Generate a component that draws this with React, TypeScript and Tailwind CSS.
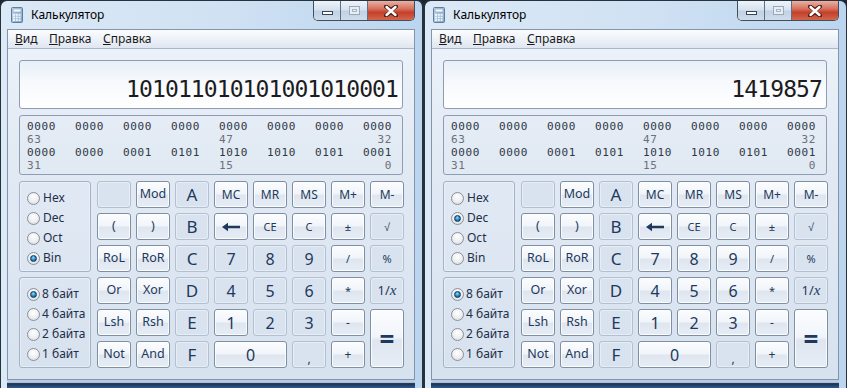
import React from "react";

type Btn = {
  l: React.ReactNode;
  on: boolean;
  sz: string;
  span?: string;
};

const SANS = "font-['Noto_Sans',sans-serif]";
const MONO = "font-['DejaVu_Sans_Mono',monospace]";

const BTN_ON =
  "border-[#7f8fa3] bg-[linear-gradient(to_bottom,#fbfcfe_0%,#f1f5fa_47%,#dfe6f0_53%,#e7edf5_100%)] shadow-[inset_0_0_0_1px_rgba(255,255,255,0.8)]";
const BTN_OFF = "border-[#b2c0d2] bg-[#d9e3f0] shadow-[inset_0_0_0_1px_rgba(255,255,255,0.35)]";

const Arrow = () => (
  <svg width="20" height="10" viewBox="0 0 20 10">
    <path d="M1 5 L7 0.8 L7 3.7 L19 3.7 L19 6.3 L7 6.3 L7 9.2 Z" fill="#1e395b" />
  </svg>
);

function makeKeys(mode: "bin" | "dec"): Btn[] {
  const d = mode === "dec";
  const W = "text-[12.5px]";
  const H = "text-[17px]";
  const D = "text-[16px]";
  const M = "text-[12px]";
  const S = "text-[11px]";
  return [
    { l: "", on: false, sz: W },
    { l: "Mod", on: true, sz: W },
    { l: "A", on: false, sz: H },
    { l: "MC", on: true, sz: M },
    { l: "MR", on: true, sz: M },
    { l: "MS", on: true, sz: M },
    { l: "M+", on: true, sz: M },
    { l: "M-", on: true, sz: M },

    { l: "(", on: true, sz: W },
    { l: ")", on: true, sz: W },
    { l: "B", on: false, sz: H },
    { l: <Arrow />, on: true, sz: M },
    { l: "CE", on: true, sz: S },
    { l: "C", on: true, sz: S },
    { l: "±", on: true, sz: S },
    { l: "√", on: false, sz: S },

    { l: "RoL", on: true, sz: W },
    { l: "RoR", on: true, sz: W },
    { l: "C", on: false, sz: H },
    { l: "7", on: d, sz: D },
    { l: "8", on: d, sz: D },
    { l: "9", on: d, sz: D },
    { l: "/", on: true, sz: S },
    { l: "%", on: false, sz: S },

    { l: "Or", on: true, sz: W },
    { l: "Xor", on: true, sz: W },
    { l: "D", on: false, sz: H },
    { l: "4", on: d, sz: D },
    { l: "5", on: d, sz: D },
    { l: "6", on: d, sz: D },
    { l: "*", on: true, sz: S },
    {
      l: (
        <span>
          1/<span className="italic font-['Liberation_Serif',serif] text-[15px]">x</span>
        </span>
      ),
      on: false,
      sz: "text-[13px]",
    },

    { l: "Lsh", on: true, sz: W },
    { l: "Rsh", on: true, sz: W },
    { l: "E", on: false, sz: H },
    { l: "1", on: true, sz: D },
    { l: "2", on: d, sz: D },
    { l: "3", on: d, sz: D },
    { l: "-", on: true, sz: M },
    { l: "=", on: true, sz: "text-[26px] font-bold", span: "row-span-2" },

    { l: "Not", on: true, sz: W },
    { l: "And", on: true, sz: W },
    { l: "F", on: false, sz: H },
    { l: "0", on: true, sz: D, span: "col-span-2" },
    { l: <span className="relative top-[4px]">,</span>, on: false, sz: M },
    { l: "+", on: true, sz: M },
  ];
}

function Radio({ checked }: { checked: boolean }) {
  return (
    <span className="flex h-[13px] w-[13px] shrink-0 items-center justify-center rounded-full border border-[#8c9096] bg-[radial-gradient(circle_at_50%_35%,#ffffff_0%,#eceef1_55%,#cfd3d8_100%)]">
      {checked && (
        <span className="h-[7px] w-[7px] rounded-full border border-[#0f3a5c] bg-[radial-gradient(circle_at_45%_35%,#9fe0ff_0%,#2d8fce_45%,#0d3e66_100%)]" />
      )}
    </span>
  );
}

function Group({ items, sel, gap }: { items: string[]; sel: number; gap: string }) {
  return (
    <div className="flex flex-1 flex-col rounded-[3px] border border-[#a3b2c5] pl-[7px] pt-[6px] shadow-[inset_0_0_0_1px_rgba(255,255,255,0.35)]">
      {items.map((t, i) => (
        <div key={i} className={`flex h-[20px] items-center ${gap}`}>
          <Radio checked={i === sel} />
          <span className="text-[12px] text-[#1e2f48]">{t}</span>
        </div>
      ))}
    </div>
  );
}

function CalcIcon() {
  return (
    <svg width="12" height="16" viewBox="0 0 12 16">
      <defs>
        <linearGradient id="cg" x1="0" y1="0" x2="1" y2="1">
          <stop offset="0" stopColor="#c9dcef" />
          <stop offset="1" stopColor="#7ea3c8" />
        </linearGradient>
      </defs>
      <rect x="0.5" y="0.5" width="11" height="15" rx="1" fill="url(#cg)" stroke="#5f7f9f" />
      <rect x="2" y="2" width="8" height="3" fill="#f4f8fc" stroke="#7b98b5" strokeWidth="0.6" />
      {[0, 1, 2].map((r) =>
        [0, 1, 2].map((c) => (
          <rect key={`${r}${c}`} x={2 + c * 2.8} y={7 + r * 2.6} width="2" height="1.8" fill="#f3f7fb" />
        ))
      )}
    </svg>
  );
}

function TitleButtons() {
  return (
    <div className="flex h-[20px] self-start overflow-hidden rounded-b-[5px] border border-t-0 border-[#3f4f63]">
      <div className="flex w-[27px] items-end justify-center border-r border-[#5d6f85] bg-[linear-gradient(to_bottom,#eef3f9_0%,#d8e3ef_45%,#c2d2e4_55%,#cfdcea_100%)] pb-[5px]">
        <span className="h-[4px] w-[11px] border border-[#3a4658] bg-white" />
      </div>
      <div className="flex w-[27px] items-center justify-center border-r border-[#5d6f85] bg-[linear-gradient(to_bottom,#eef3f9_0%,#d8e3ef_45%,#c2d2e4_55%,#cfdcea_100%)]">
        <span className="flex h-[9px] w-[11px] items-center justify-center border border-[#9aa8b8] bg-[#e6edf5]">
          <span className="h-[3px] w-[5px] border border-[#a9b5c3]" />
        </span>
      </div>
      <div className="flex w-[46px] items-center justify-center bg-[linear-gradient(to_bottom,#eab0a3_0%,#d6735f_40%,#c4402a_60%,#d4664c_100%)]">
        <svg width="14" height="12" viewBox="0 0 14 12">
          <path
            d="M2 1.5 L7 5 L12 1.5 M2 10.5 L7 7 L12 10.5"
            fill="none"
            stroke="#4a2019"
            strokeWidth="4"
            strokeLinecap="round"
          />
          <path
            d="M2.5 2 L11.5 10 M11.5 2 L2.5 10"
            fill="none"
            stroke="#ffffff"
            strokeWidth="2.4"
            strokeLinecap="round"
          />
        </svg>
      </div>
    </div>
  );
}

function BitPanel() {
  const r1 = ["0000", "0000", "0000", "0000", "0000", "0000", "0000", "0000"];
  const r2 = ["0000", "0000", "0001", "0101", "1010", "1010", "0101", "0001"];
  const Row = ({ v }: { v: string[] }) => (
    <div className="flex h-[13px] items-center text-[#2f3844]">
      {v.map((s, i) => (
        <span key={i} className="w-[48px] shrink-0">
          {s}
        </span>
      ))}
    </div>
  );
  const Num = ({ a, b, c }: { a: string; b: string; c: string }) => (
    <div className="flex h-[13px] items-center text-[#6c7178]">
      <span className="w-[192px] shrink-0">{a}</span>
      <span className="w-[144px] shrink-0">{b}</span>
      <span className="w-[29px] shrink-0 text-right">{c}</span>
    </div>
  );
  return (
    <div
      className={`mt-[6px] h-[60px] rounded-[3px] border border-[#8d9db2] pl-[7px] pt-[4px] ${MONO} text-[11px] tracking-[0.6px] leading-[13px]`}
    >
      <Row v={r1} />
      <Num a="63" b="47" c="32" />
      <Row v={r2} />
      <Num a="31" b="15" c="0" />
    </div>
  );
}

function Window({ mode, left }: { mode: "bin" | "dec"; left: boolean }) {
  const keys = makeKeys(mode);
  const value = mode === "bin" ? "1010110101010010100001".slice(1) : "1419857";
  return (
    <div
      className={`flex h-[388px] shrink-0 flex-col rounded-t-[7px] border-t border-l border-[#27323f] pl-[6px] pr-[7px] ${
        left ? "w-[424px] border-r-2" : "w-[423px] border-r"
      } bg-[linear-gradient(to_right,#dce9f6_0%,#cfe1f3_55%,#bcd5ee_100%)]`}
    >
      {/* title bar */}
      <div className="flex h-[28px] shrink-0 justify-between">
        <div className={`flex items-center gap-[8px] pl-[4px] ${left ? "" : "-ml-[2px]"}`}>
          <CalcIcon />
          <span className={`${SANS} text-[12px] text-black`}>Калькулятор</span>
        </div>
        <TitleButtons />
      </div>

      {/* client */}
      <div
        className={`flex h-[351px] shrink-0 flex-col border border-[#8495ab] bg-[linear-gradient(to_bottom,#eef3fa_0%,#e2eaf4_35%,#d7e2ef_100%)] ${SANS}`}
      >
        <div className="flex h-[19px] shrink-0 items-center border-b border-[#a9b7c9] bg-[linear-gradient(to_bottom,#fbfcfe_0%,#eef2f8_50%,#dfe6f0_100%)] pl-[7px] text-[12px] text-[#1a1a1a]">
          <span className="w-[34px]">
            <span className="underline">В</span>ид
          </span>
          <span className="w-[54px]">
            <span className="underline">П</span>равка
          </span>
          <span>
            <span className="underline">С</span>правка
          </span>
        </div>

        <div className="flex flex-col px-[11px] pt-[11px]">
          {/* display */}
          <div className="flex h-[49px] items-end justify-end rounded-[3px] border border-[#8d9db2] bg-[linear-gradient(to_bottom,#e8eff8_0%,#f7f9fd_45%,#ffffff_100%)] pb-[7px] pr-[4px]">
            <span className={`${MONO} text-[23px] leading-[23px] tracking-[-0.9px] text-[#1c1c1c]`}>
              {mode === "bin" ? "101011010101001010001" : value}
            </span>
          </div>

          <BitPanel />

          {/* keypad */}
          <div className="mt-[6px] flex">
            <div className="mr-[6px] flex h-[187px] w-[72px] shrink-0 flex-col gap-[5px]">
              <Group items={["Hex", "Dec", "Oct", "Bin"]} sel={mode === "bin" ? 3 : 1} gap="gap-[3px]" />
              <Group items={["8 байт", "4 байта", "2 байта", "1 байт"]} sel={0} gap="gap-[2px]" />
            </div>
            <div className="grid grid-cols-[repeat(8,34px)] grid-rows-[repeat(6,27px)] gap-[5px]">
              {keys.map((k, i) => (
                <div
                  key={i}
                  className={`flex items-center justify-center rounded-[3px] border leading-none text-[#1e395b] ${
                    k.on ? BTN_ON : BTN_OFF
                  } ${k.sz} ${k.span ?? ""}`}
                >
                  {k.l}
                </div>
              ))}
            </div>
          </div>
        </div>
      </div>

      {/* bottom frame */}
      <div className="flex-1 bg-[linear-gradient(to_bottom,#b7cce3_0%,#b7cce3_30%,#1c2f4a_45%,#2e5c92_100%)]" />
    </div>
  );
}

export default function App() {
  return (
    <div className="flex h-[388px] w-[847px] overflow-hidden bg-[#1d2633]">
      <Window mode="bin" left />
      <Window mode="dec" left={false} />
    </div>
  );
}
